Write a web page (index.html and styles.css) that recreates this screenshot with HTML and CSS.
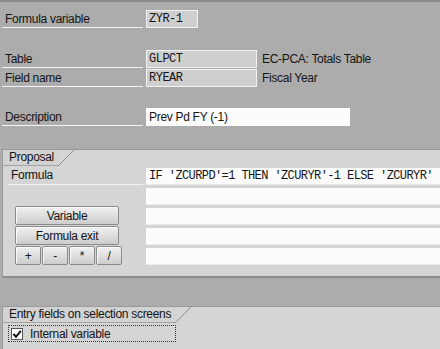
FILE: index.html
```html
<!DOCTYPE html>
<html lang="en">
<head>
<meta charset="UTF-8">
<title>Formula variable</title>
<link rel="stylesheet" href="styles.css">
</head>
<body>
    <!-- Header fields -->
    <div class="row first">
        <div class="lbl">Formula variable</div>
        <div class="fld ro short">ZYR-1</div>
    </div>

    <div class="row gap-table">
        <div class="lbl">Table</div>
        <div class="fld ro mid">GLPCT</div>
        <div class="desc">EC-PCA: Totals Table</div>
    </div>
    <div class="row gap-1">
        <div class="lbl">Field name</div>
        <div class="fld ro mid">RYEAR</div>
        <div class="desc">Fiscal Year</div>
    </div>

    <div class="row gap-descr">
        <div class="lbl">Description</div>
        <div class="fld edit long">Prev Pd FY (-1)</div>
    </div>

    <!-- Proposal group -->
    <div class="group proposal">
        <div class="tab">
            <span class="tab-text">Proposal</span>
            <svg class="tab-edge" width="16" height="16" viewBox="0 0 16 16"><line x1="0" y1="16" x2="16" y2="0" stroke="#8e8e8e" stroke-width="1"/></svg>
        </div>

        <div class="prow first-prow">
            <div class="pleft"><div class="plbl">Formula</div></div>
            <div class="pfld mono">IF 'ZCURPD'=1 THEN 'ZCURYR'-1 ELSE 'ZCURYR'</div>
        </div>
        <div class="prow">
            <div class="pleft"></div>
            <div class="pfld"></div>
        </div>
        <div class="prow">
            <div class="pleft"><button class="btn wide">Variable</button></div>
            <div class="pfld"></div>
        </div>
        <div class="prow">
            <div class="pleft"><button class="btn wide">Formula exit</button></div>
            <div class="pfld"></div>
        </div>
        <div class="prow">
            <div class="pleft">
                <div class="ops">
                    <button class="btn op">+</button>
                    <button class="btn op">-</button>
                    <button class="btn op">*</button>
                    <button class="btn op">/</button>
                </div>
            </div>
            <div class="pfld"></div>
        </div>
    </div>

    <!-- Entry fields group -->
    <div class="group entry">
        <div class="tab">
            <span class="tab-text">Entry fields on selection screens</span>
            <svg class="tab-edge" width="16" height="16" viewBox="0 0 16 16"><line x1="0" y1="16" x2="16" y2="0" stroke="#8e8e8e" stroke-width="1"/></svg>
        </div>
        <div class="check-row">
            <span class="check">
                <svg width="10" height="10" viewBox="0 0 10 10"><path d="M1.5 5 L4 7.8 L8.8 1.8" fill="none" stroke="#111" stroke-width="2"/></svg>
            </span>
            <span class="check-text">Internal variable</span>
        </div>
    </div>
</body>
</html>
```

FILE: styles.css
```css
body {
    margin: 0;
    background: #acacac;
    border-top: 2px solid #8a8a8a;
    font-family: "Liberation Sans", Arial, sans-serif;
    font-size: 12px;
    letter-spacing: -0.3px;
    color: #141414;
    overflow: hidden;
    height: 347px;
}

/* header rows */
.row {
    display: flex;
    align-items: stretch;
    height: 18px;
}

.first { margin-top: 8px; }
.gap-table { margin-top: 22px; }
.gap-1 { margin-top: 1px; }
.gap-descr { margin-top: 21px; }

.lbl {
    width: 138px;
    margin-left: 2px;
    padding-left: 3px;
    border-bottom: 1px solid #f4f4f4;
    line-height: 18px;
    margin-right: 3px;
}

.fld {
    box-sizing: border-box;
    height: 18px;
    padding-left: 2px;
    line-height: 16px;
    border: 1px solid #f2f2f2;
}

.ro {
    background: #cfcfcf;
    font-family: "Liberation Mono", "Courier New", monospace;
    letter-spacing: -0.5px;
}

.edit {
    background: #fcfcfc;
    border-color: #fcfcfc;
}

.short { width: 52px; }
.mid { width: 111px; }
.long { width: 204px; }

.desc {
    margin-left: 5px;
    line-height: 18px;
}

/* group boxes */
.group {
    margin-left: 2px;
    background: #d5d5d5;
    border-left: 1px solid #9a9a9a;
    border-top: 1px solid #9a9a9a;
}

.proposal {
    margin-top: 23px;
    padding-bottom: 11px;
    border-bottom: 2px solid #8c8c8c;
}

.entry {
    margin-top: 28px;
    height: 60px;
}

.tab {
    display: flex;
    align-items: flex-end;
    height: 16px;
}

.tab-text {
    height: 15px;
    line-height: 15px;
    padding-left: 6px;
    padding-right: 4px;
    border-bottom: 1px solid #a4a4a4;
    background: #d2d2d2;
}

.tab-edge {
    display: block;
}

/* proposal rows */
.prow {
    display: flex;
    height: 17px;
    margin-top: 3px;
}

.first-prow { margin-top: 2px; }

.pleft {
    width: 143px;
    flex: none;
    display: flex;
    align-items: flex-end;
}

.plbl {
    width: 132px;
    margin-left: 5px;
    padding-left: 3px;
    height: 17px;
    line-height: 17px;
    border-bottom: 1px solid #f4f4f4;
}

.pfld {
    flex: 1;
    background: #fcfcfc;
    border-bottom: 1px solid #ececec;
}

.mono {
    font-family: "Liberation Mono", "Courier New", monospace;
    font-size: 12px;
    letter-spacing: -0.6px;
    line-height: 17px;
    padding-left: 3px;
    white-space: nowrap;
}

/* buttons */
.btn {
    font-family: "Liberation Sans", Arial, sans-serif;
    font-size: 12px;
    letter-spacing: -0.3px;
    color: #141414;
    height: 19px;
    padding: 0;
    border: 1px solid #8a8a8a;
    border-radius: 2px;
    background: linear-gradient(#f0f0f0, #cdcdcd);
    box-shadow: inset 1px 1px 0 #fafafa;
}

.wide {
    width: 104px;
    margin-left: 12px;
}

.ops {
    display: flex;
    gap: 1px;
    margin-left: 12px;
}

.op {
    width: 26px;
}

/* checkbox */
.check-row {
    display: flex;
    align-items: center;
    width: 164px;
    height: 15px;
    margin-top: 2px;
    margin-left: 5px;
    padding-left: 2px;
    border: 1px dotted #333;
}

.check {
    width: 10px;
    height: 10px;
    background: #fcfcfc;
    border: 1px solid #555;
    display: flex;
}

.check-text {
    margin-left: 7px;
}
```
